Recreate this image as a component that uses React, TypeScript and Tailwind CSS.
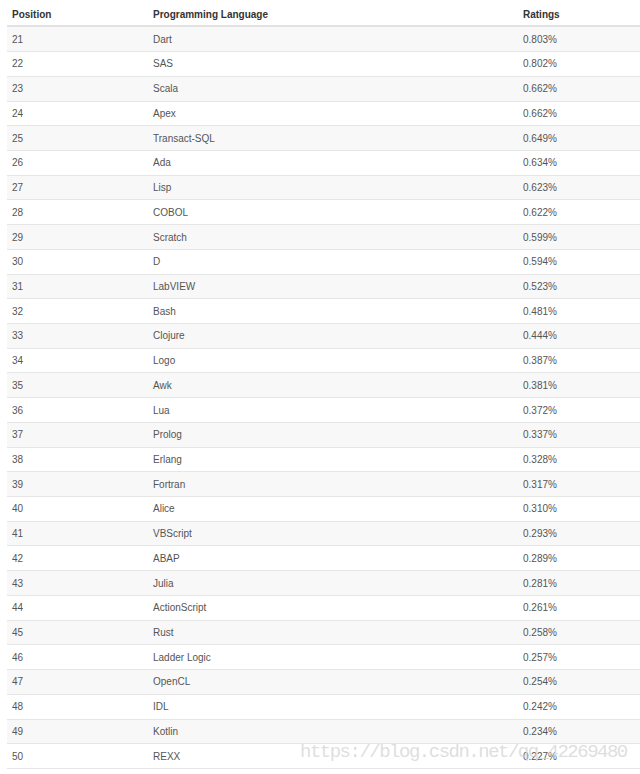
const rows: [number, string, string][] = [
  [21, "Dart", "0.803%"],
  [22, "SAS", "0.802%"],
  [23, "Scala", "0.662%"],
  [24, "Apex", "0.662%"],
  [25, "Transact-SQL", "0.649%"],
  [26, "Ada", "0.634%"],
  [27, "Lisp", "0.623%"],
  [28, "COBOL", "0.622%"],
  [29, "Scratch", "0.599%"],
  [30, "D", "0.594%"],
  [31, "LabVIEW", "0.523%"],
  [32, "Bash", "0.481%"],
  [33, "Clojure", "0.444%"],
  [34, "Logo", "0.387%"],
  [35, "Awk", "0.381%"],
  [36, "Lua", "0.372%"],
  [37, "Prolog", "0.337%"],
  [38, "Erlang", "0.328%"],
  [39, "Fortran", "0.317%"],
  [40, "Alice", "0.310%"],
  [41, "VBScript", "0.293%"],
  [42, "ABAP", "0.289%"],
  [43, "Julia", "0.281%"],
  [44, "ActionScript", "0.261%"],
  [45, "Rust", "0.258%"],
  [46, "Ladder Logic", "0.257%"],
  [47, "OpenCL", "0.254%"],
  [48, "IDL", "0.242%"],
  [49, "Kotlin", "0.234%"],
  [50, "REXX", "0.227%"],
];

const App = () => {
  return (
    <div className="relative w-[640px] h-[774px] bg-white overflow-hidden font-['Liberation_Sans',Arial,sans-serif] text-[10px]">
      <div className="ml-[7px]">
        {/* header */}
        <div className="flex h-[27.4px] items-center pt-[4px] border-b-2 border-[#e2e2e2] font-bold text-[#333]">
          <div className="w-[141px] pl-[5px]">Position</div>
          <div className="w-[370px] pl-[5px]">Programming Language</div>
          <div className="flex-1 pl-[5px]">Ratings</div>
        </div>

        {/* rows */}
        {rows.map(([pos, lang, rating], i) => (
          <div
            key={pos}
            className={
              "flex h-[24.72px] items-center border-b border-[#e6e6e6] text-[#555] " +
              (i % 2 === 0 ? "bg-[#f8f8f8]" : "bg-white")
            }
          >
            <div className="w-[141px] pl-[5px]">{pos}</div>
            <div className="w-[370px] pl-[5px]">{lang}</div>
            <div className="flex-1 pl-[5px]">{rating}</div>
          </div>
        ))}
      </div>

      {/* csdn watermark */}
      <div className="absolute left-[300px] top-[742px] font-['Liberation_Mono',monospace] text-[19px] leading-[20px] tracking-[-1.5px] text-[#d6d6d6]/80 whitespace-nowrap">
        https://blog.csdn.net/qq_42269480
      </div>
    </div>
  );
};

export default App;
